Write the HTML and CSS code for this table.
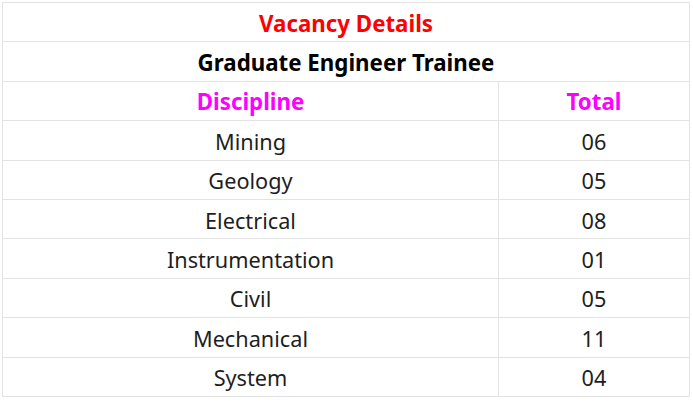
FILE: index.html
```html
<!DOCTYPE html>
<html>
<head>
<meta charset="utf-8">
<link rel="stylesheet" href="styles.css">
</head>
<body>
<table class="vacancy">
  <tr><td class="title" colspan="2">Vacancy Details</td></tr>
  <tr><td class="post" colspan="2">Graduate Engineer Trainee</td></tr>
  <tr><td class="head">Discipline</td><td class="head">Total</td></tr>
  <tr><td>Mining</td><td>06</td></tr>
  <tr><td>Geology</td><td>05</td></tr>
  <tr><td>Electrical</td><td>08</td></tr>
  <tr><td>Instrumentation</td><td>01</td></tr>
  <tr><td>Civil</td><td>05</td></tr>
  <tr><td>Mechanical</td><td>11</td></tr>
  <tr><td>System</td><td>04</td></tr>
</table>
</body>
</html>
```
FILE: styles.css
```css
html, body {
  margin: 0;
  padding: 0;
  background: #fff;
}
body {
  padding: 2px 0 0 2px;
  font-family: "Segoe UI", "Noto Sans", "Open Sans", sans-serif;
  color: #1e1e1e;
}
.vacancy {
  border-collapse: collapse;
  width: 688px;
  height: 395px;
}
.vacancy td {
  border: 1px solid #e3e3e3;
  text-align: center;
  font-size: 21.7px;
  line-height: 24px;
  padding: 3px 0 0 0;
  height: 35px;
}
.vacancy tr td:first-child:not([colspan]) {
  width: 495px;
}
.vacancy .title {
  color: #f00;
  font-weight: bold;
  font-size: 22.3px;
}
.vacancy .post {
  color: #000;
  font-weight: bold;
  font-size: 22.3px;
}
.vacancy .head {
  color: #f0f;
  font-weight: bold;
  font-size: 22.3px;
}
```
